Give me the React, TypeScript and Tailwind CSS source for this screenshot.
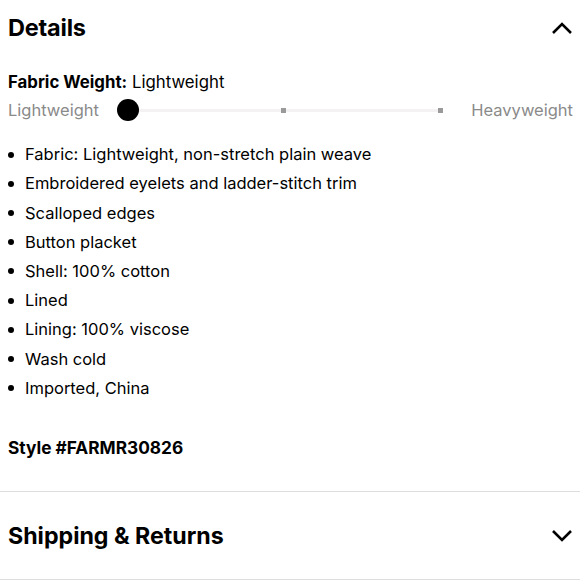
import React from "react";

const items = [
  "Fabric: Lightweight, non-stretch plain weave",
  "Embroidered eyelets and ladder-stitch trim",
  "Scalloped edges",
  "Button placket",
  "Shell: 100% cotton",
  "Lined",
  "Lining: 100% viscose",
  "Wash cold",
  "Imported, China",
];

function Chevron({ up }: { up?: boolean }) {
  return (
    <svg width="22" height="14" viewBox="0 0 22 14" fill="none">
      {up ? (
        <path d="M2 12 L11 3 L20 12" stroke="#000" strokeWidth="2.6" />
      ) : (
        <path d="M2 2 L11 11 L20 2" stroke="#000" strokeWidth="2.6" />
      )}
    </svg>
  );
}

export default function App() {
  return (
    <div
      className="w-[580px] h-[580px] bg-white text-black overflow-hidden"
      style={{ fontFamily: "Inter, 'Liberation Sans', sans-serif" }}
    >
      <div className="flex items-center justify-between pl-[8px] pr-[7px] pt-[11px] h-[44px]">
        <h2 className="text-[23.5px] font-bold leading-none tracking-[-0.2px]">Details</h2>
        <Chevron up />
      </div>
      <div className="pl-[8px] pr-[7px] mt-[28px]">
        <div className="text-[16.8px] leading-[20px]">
          <span className="font-bold">Fabric Weight:</span> Lightweight
        </div>
        <div className="flex items-center h-[28px] mt-[4px]">
          <span className="text-[16.5px] text-[#8a8a8a] w-[109px]">Lightweight</span>
          <div className="relative flex-1 h-[22px] flex items-center mr-[28px]">
            <div className="absolute left-[11px] right-[0px] h-[3px] bg-[#f4f2f2]" />
            <div className="absolute left-[164px] w-[5px] h-[5px] bg-[#9a9a9a]" />
            <div className="absolute right-[0px] w-[5px] h-[5px] bg-[#9a9a9a]" />
            <div className="absolute left-0 w-[22px] h-[22px] rounded-full bg-black" />
          </div>
          <span className="text-[16.5px] text-[#8a8a8a]">Heavyweight</span>
        </div>
        <ul className="mt-[16px]">
          {items.map((t) => (
            <li key={t} className="flex items-center h-[29.2px] text-[16.5px]">
              <span className="w-[6px] h-[6px] rounded-full bg-black mr-[11px]" />
              {t}
            </li>
          ))}
        </ul>
        <div className="mt-[32px] text-[17.3px] font-bold">Style #FARMR30826</div>
      </div>
      <div className="mt-[30px] border-t border-[#dedede]" />
      <div className="flex items-center justify-between pl-[8px] pr-[7px] pt-[2px] h-[88px] border-b border-[#dedede]">
        <h2 className="text-[23.2px] font-bold leading-none">Shipping &amp; Returns</h2>
        <Chevron />
      </div>
    </div>
  );
}
